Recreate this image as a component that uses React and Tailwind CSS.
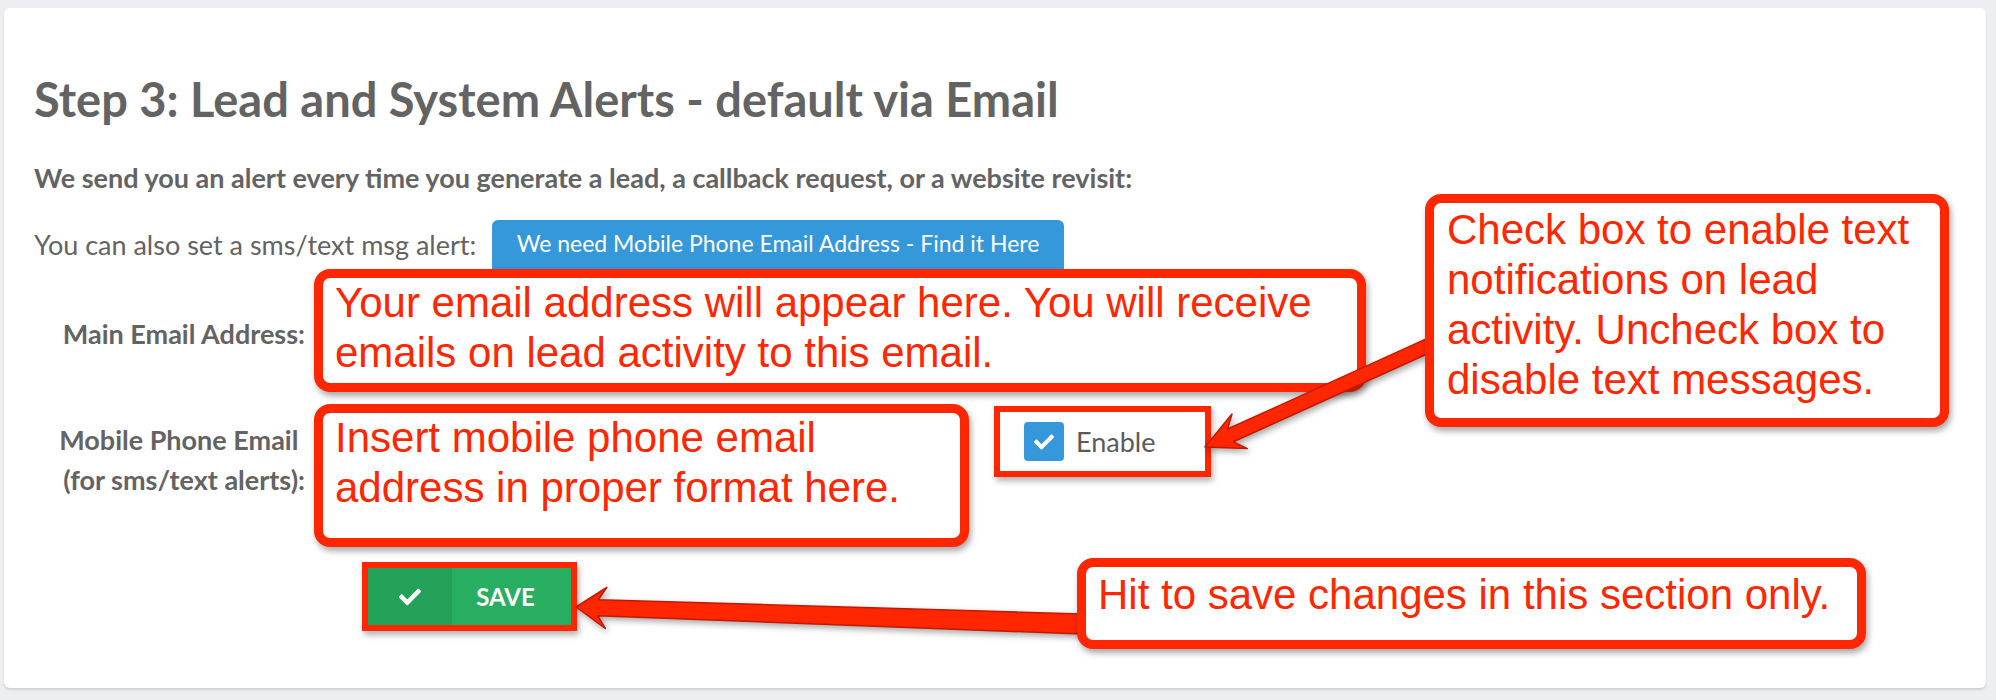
import { FaCheck } from "react-icons/fa";

const calloutBox =
  "bg-white border-[9px] border-[#ff2600] rounded-[16px] shadow-[2px_4px_6px_rgba(0,0,0,0.35)] font-['Liberation_Sans',Arial,sans-serif] text-[42px] leading-[50px] text-[#ff2600] whitespace-nowrap";

function Arrows() {
  return (
    <svg
      className="absolute inset-0 z-10 pointer-events-none drop-shadow-[2px_3px_3px_rgba(0,0,0,0.35)]"
      width="1996"
      height="700"
      viewBox="0 0 1996 700"
    >
      {/* to the Enable checkbox */}
      <polygon
        points="1205,447 1232,414 1227.6,429 1440.5,332.4 1446.3,345.2 1233.4,441.8 1247.4,448.6"
        fill="#ff2600"
        stroke="#c21a00"
        strokeWidth="1.5"
        strokeLinejoin="round"
      />
      {/* to the save button */}
      <polygon
        points="576,607 606.7,587.5 598.3,599.7 1082,614 1081.4,634 597.7,615.7 605.3,628.5"
        fill="#ff2600"
        stroke="#c21a00"
        strokeWidth="1.5"
        strokeLinejoin="round"
      />
    </svg>
  );
}

export default function App() {
  return (
    <div className="relative w-[1996px] h-[700px] bg-[#eceef1] pt-2 pl-1 font-['Lato',sans-serif] text-[#636363]">
      <div className="relative w-[1982px] h-[680px] bg-white rounded-md shadow-[0_2px_2px_rgba(0,0,0,0.12)] pl-[30px] pt-[68px]">
        <h1 className="text-[47px] leading-[47px] font-bold">
          Step 3: Lead and System Alerts - default via Email
        </h1>
        <p className="mt-[41px] text-[27px] leading-[27px] font-bold">
          We send you an alert every time you generate a lead, a callback request, or a website revisit:
        </p>

        <div className="mt-[29px] flex items-center h-[49px]">
          <span className="w-[458px] text-[27px] leading-[27px]">You can also set a sms/text msg alert:</span>
          <button className="w-[572px] h-[49px] self-start bg-[#3498db] rounded-t-md text-white text-[23px] leading-[24px] pb-1">
            We need Mobile Phone Email Address - Find it Here
          </button>
        </div>

        {/* main email */}
        <div className="flex gap-[9px]">
          <label className="w-[271px] mt-[45px] text-right text-[27px] leading-[40px] font-bold whitespace-nowrap">
            Main Email Address:
          </label>
          <div className={`${calloutBox} w-[1052px] h-[123px] pl-3`}>
            Your email address will appear here. You will receive
            <br />
            emails on lead activity to this email.
          </div>
        </div>

        {/* mobile email */}
        <div className="mt-3 flex">
          <label className="w-[271px] mt-4 text-right text-[27px] leading-[40px] font-bold whitespace-nowrap">
            Mobile Phone Email{"\u00a0"}
            <br />
            (for sms/text alerts):
          </label>
          <div className={`${calloutBox} ml-[9px] w-[655px] h-[143px] pl-3`}>
            Insert mobile phone email
            <br />
            address in proper format here.
          </div>
          <div className="ml-[25px] mt-[2px] w-[217px] h-[71px] border-[6px] border-[#ff2600] shadow-[2px_4px_6px_rgba(0,0,0,0.3)] flex items-center pl-6 gap-3">
            <span className="w-10 h-[39px] rounded bg-[#3498db] flex items-center justify-center text-white">
              <FaCheck size={20} />
            </span>
            <span className="text-[27px] leading-[27px] text-[#5a5a5a]">Enable</span>
          </div>
        </div>

        {/* save */}
        <div className="mt-[11px] flex items-start">
          <div className="ml-[328px] mt-1 border-[6px] border-[#ff2600] shadow-[2px_4px_6px_rgba(0,0,0,0.3)]">
            <button className="flex h-[57px] w-[203px] text-white shadow-[inset_0_4px_0_rgba(0,0,0,0.14)]">
              <span className="w-[84px] h-full bg-[#24a159] flex items-center justify-center">
                <FaCheck size={22} />
              </span>
              <span className="flex-1 h-full bg-[#27ae60] flex items-center justify-center text-[24px] font-bold pr-3">
                SAVE
              </span>
            </button>
          </div>
          <div className={`${calloutBox} relative z-20 ml-[500px] w-[789px] h-[91px] pl-3 pt-[3px]`}>
            Hit to save changes in this section only.
          </div>
        </div>

        {/* checkbox hint */}
        <div className={`${calloutBox} absolute z-20 left-[1421px] top-[186px] w-[524px] h-[233px] pl-[13px] pt-[2px]`}>
          Check box to enable text
          <br />
          notifications on lead
          <br />
          activity. Uncheck box to
          <br />
          disable text messages.
        </div>
      </div>
      <Arrows />
    </div>
  );
}
